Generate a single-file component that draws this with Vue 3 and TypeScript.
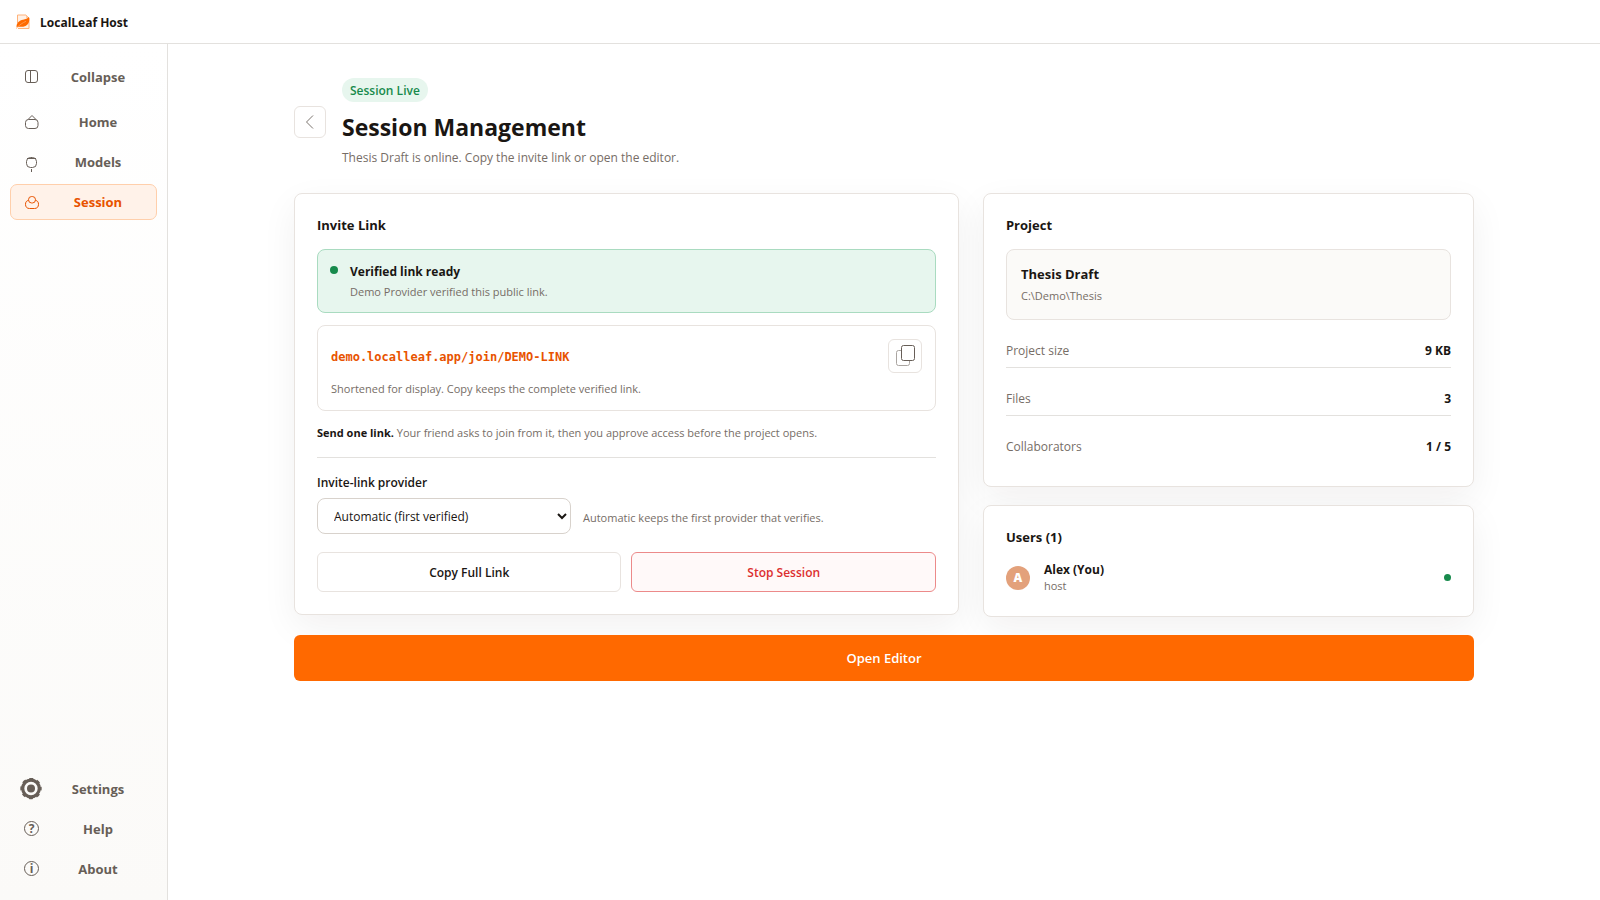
<script setup lang="ts">
import { ref } from 'vue'

interface NavItem {
  id: string
  label: string
}

const primaryNav: NavItem[] = [
  { id: 'home', label: 'Home' },
  { id: 'models', label: 'Models' },
  { id: 'session', label: 'Session' },
]

const secondaryNav: NavItem[] = [
  { id: 'settings', label: 'Settings' },
  { id: 'help', label: 'Help' },
  { id: 'about', label: 'About' },
]

const active = ref('session')
const provider = ref('auto')

const stats = [
  { label: 'Project size', value: '9 KB' },
  { label: 'Files', value: '3' },
  { label: 'Collaborators', value: '1 / 5' },
]
</script>

<template>
  <div class="app">
    <header class="topbar">
      <svg class="logo" viewBox="0 0 16 16" aria-hidden="true">
        <path d="M2.500 9V1H11L14 4V14.500H3" fill="#fff1e6" stroke="#ffb27a" stroke-width="1" />
        <path d="M11 1V4H14Z" fill="#ffc79e" />
        <path d="M1.500 13C1.500 8.500 4.500 6.500 8 5.800C10.500 5.300 12.500 4.500 14 3C14.800 7 13.800 10.500 10.500 12C7.500 13.300 4.500 12.500 1.500 13Z" fill="#ff6a00" />
        <path d="M1 14.500C4.500 11 7.500 8.800 11 7.300" fill="none" stroke="#ffa05c" stroke-width="0.800" />
      </svg>
      <span class="brand">LocalLeaf Host</span>
    </header>

    <div class="body">
      <aside class="sidebar">
        <button type="button" class="nav-item collapse">
          <svg class="icon" viewBox="0 0 22 22" aria-hidden="true">
            <rect x="5.500" y="4.500" width="12" height="12" rx="2.500" />
            <path d="M10.500 4.500V16.500" />
          </svg>
          <span>Collapse</span>
        </button>

        <nav class="nav" aria-label="Main">
          <button
            v-for="item in primaryNav"
            :key="item.id"
            type="button"
            class="nav-item"
            :class="{ active: active === item.id }"
            @click="active = item.id"
          >
            <svg v-if="item.id === 'home'" class="icon" viewBox="0 0 22 22" aria-hidden="true">
              <rect x="5.500" y="8.500" width="12.500" height="9" rx="3" />
              <path d="M8 8.500L12 4.500L16 8.500" />
            </svg>
            <svg v-else-if="item.id === 'models'" class="icon" viewBox="0 0 22 22" aria-hidden="true">
              <rect x="6.500" y="6.500" width="10" height="10" rx="4" />
              <path d="M7 7.500H16M11.500 18V21" />
            </svg>
            <svg v-else class="icon" viewBox="0 0 22 22" aria-hidden="true">
              <rect x="8.500" y="5.500" width="7" height="6.500" rx="3.200" />
              <path d="M8.500 9.300C6.500 9.800 5.500 11 5.500 13.300C5.500 16 7 17.500 9.500 17.500H14.500C17 17.500 18.500 16 18.500 13.300C18.500 11 17.500 9.800 15.500 9.300" />
            </svg>
            <span>{{ item.label }}</span>
          </button>
        </nav>

        <nav class="nav bottom" aria-label="Support">
          <button
            v-for="item in secondaryNav"
            :key="item.id"
            type="button"
            class="nav-item"
            :class="{ active: active === item.id }"
            @click="active = item.id"
          >
            <svg v-if="item.id === 'settings'" class="icon" viewBox="0 0 22 22" aria-hidden="true">
              <circle cx="11" cy="10.500" r="8.300" stroke-width="3.200" />
              <circle cx="11" cy="10.500" r="9.900" stroke-width="1.600" stroke-dasharray="4 3.775" stroke-dashoffset="2" />
              <circle cx="11" cy="10.500" r="4" class="solid" />
            </svg>
            <svg v-else class="icon" viewBox="0 0 22 22" aria-hidden="true">
              <circle cx="11.500" cy="10.500" r="7" />
              <text x="11.500" y="15" text-anchor="middle">{{ item.id === 'help' ? '?' : 'i' }}</text>
            </svg>
            <span>{{ item.label }}</span>
          </button>
        </nav>
      </aside>

      <main class="main">
        <div class="content">
          <div class="page-head">
            <button type="button" class="back" aria-label="Back">
              <svg viewBox="0 0 16 16" aria-hidden="true"><path d="M11 1.500L4.500 8L11 14.500" /></svg>
            </button>
            <div class="page-title">
              <span class="pill">Session Live</span>
              <h1>Session Management</h1>
              <p>Thesis Draft is online. Copy the invite link or open the editor.</p>
            </div>
          </div>

          <div class="grid">
            <section class="card invite">
              <h2>Invite Link</h2>

              <div class="verified" role="status">
                <span class="dot large"></span>
                <div>
                  <strong>Verified link ready</strong>
                  <p>Demo Provider verified this public link.</p>
                </div>
              </div>

              <div class="link-box">
                <div class="link-row">
                  <code>demo.localleaf.app/join/DEMO-LINK</code>
                  <button type="button" class="copy" aria-label="Copy link">
                    <svg viewBox="0 0 22 22" aria-hidden="true">
                      <rect class="sheet-back" x="2.500" y="5.500" width="13" height="15" rx="2" />
                      <rect class="sheet-front" x="7.500" y="0.500" width="13" height="15" rx="2" />
                    </svg>
                  </button>
                </div>
                <p>Shortened for display. Copy keeps the complete verified link.</p>
              </div>

              <p class="hint"><strong>Send one link.</strong> Your friend asks to join from it, then you approve access before the project opens.</p>

              <div class="provider">
                <label for="provider">Invite-link provider</label>
                <div class="provider-row">
                  <select id="provider" v-model="provider">
                    <option value="auto">Automatic (first verified)</option>
                  </select>
                  <span>Automatic keeps the first provider that verifies.</span>
                </div>
              </div>

              <div class="actions">
                <button type="button" class="btn">Copy Full Link</button>
                <button type="button" class="btn danger">Stop Session</button>
              </div>
            </section>

            <div class="side">
              <section class="card">
                <h2>Project</h2>
                <div class="project">
                  <strong>Thesis Draft</strong>
                  <span>C:\Demo\Thesis</span>
                </div>
                <dl class="stats">
                  <div v-for="stat in stats" :key="stat.label">
                    <dt>{{ stat.label }}</dt>
                    <dd>{{ stat.value }}</dd>
                  </div>
                </dl>
              </section>

              <section class="card">
                <h2>Users (1)</h2>
                <div class="user">
                  <span class="avatar">A</span>
                  <div class="user-text">
                    <strong>Alex (You)</strong>
                    <span>host</span>
                  </div>
                  <span class="dot"></span>
                </div>
              </section>
            </div>
          </div>

          <button type="button" class="open-editor">Open Editor</button>
        </div>
      </main>
    </div>
  </div>
</template>

<style>
body {
  margin: 0;
  background: #fff;
}
</style>

<style scoped>
.app {
  min-height: 100vh;
  display: flex;
  flex-direction: column;
  color: #1a1613;
  font-family: "Open Sans", "Noto Sans", sans-serif;
  font-size: 12px;
}

.app * {
  box-sizing: border-box;
}

button,
select {
  font-family: inherit;
  color: inherit;
  cursor: pointer;
}

h1,
h2,
p,
dl,
dd {
  margin: 0;
}

.topbar {
  height: 44px;
  display: flex;
  align-items: center;
  gap: 9px;
  padding: 1px 15px 0;
  border-bottom: 1px solid #e3e1de;
}

.logo {
  width: 16px;
  height: 16px;
}

.brand {
  font-size: 12px;
  font-weight: 700;
}

.body {
  flex: 1;
  display: flex;
}

.sidebar {
  width: 168px;
  flex: none;
  display: flex;
  flex-direction: column;
  padding: 15px 10px 13px;
  border-right: 1px solid #e3e1de;
  background: linear-gradient(#fff, #fbfaf8);
}

.nav {
  display: flex;
  flex-direction: column;
  gap: 4px;
}

.nav.bottom {
  margin-top: auto;
}

.nav-item {
  height: 36px;
  display: grid;
  grid-template-columns: 22px 1fr;
  align-items: center;
  gap: 8px;
  padding: 0 10px 0 9px;
  border: 1px solid transparent;
  border-radius: 7px;
  background: none;
  color: #675e57;
  font-size: 13px;
  font-weight: 700;
  text-align: center;
}

.nav-item.collapse {
  margin-bottom: 9px;
}

.nav-item.active {
  border-color: #ffcfab;
  background: #fff2e9;
  color: #e85300;
}

.icon {
  width: 22px;
  height: 22px;
  fill: none;
  stroke: currentColor;
  stroke-width: 1;
}

.icon .solid {
  fill: currentColor;
  stroke: none;
}

.icon text {
  fill: currentColor;
  stroke: none;
  font-size: 12px;
  font-weight: 700;
}

.main {
  flex: 1;
  min-width: 0;
  padding: 34px 40px;
}

.content {
  max-width: 1180px;
  margin: 0 auto;
}

.page-head {
  display: flex;
  align-items: center;
  gap: 16px;
  margin-bottom: 27px;
}

.back {
  width: 32px;
  height: 32px;
  display: grid;
  place-items: center;
  padding: 0;
  border: 1px solid #e8e3df;
  border-radius: 6px;
  background: #fff;
}

.back svg {
  width: 16px;
  height: 16px;
  fill: none;
  stroke: #7b746e;
  stroke-width: 1;
}

.page-title {
  display: flex;
  flex-direction: column;
  align-items: flex-start;
}

.pill {
  padding: 2px 8px 0;
  border-radius: 12px;
  background: #e7f6ee;
  color: #178a4c;
  font-size: 12px;
  font-weight: 600;
  line-height: 22px;
}

h1 {
  margin-top: 9px;
  font-size: 23px;
  font-weight: 700;
  line-height: 32px;
}

.page-title p {
  margin-top: 7px;
  color: #766d66;
  font-size: 12px;
  line-height: 16px;
}

.grid {
  display: grid;
  grid-template-columns: 65fr 48fr;
  align-items: start;
  gap: 24px;
}

.side {
  display: grid;
  gap: 18px;
}

.card {
  padding: 22px;
  border: 1px solid #e8e3df;
  border-radius: 8px;
  background: #fff;
  box-shadow: 0 12px 36px rgba(28, 25, 23, 0.06);
}

h2 {
  margin-bottom: 14px;
  font-size: 13px;
  font-weight: 700;
  line-height: 19px;
}

.verified {
  display: flex;
  gap: 12px;
  padding: 12px 12px 10px;
  border: 1px solid #a9dbc0;
  border-radius: 8px;
  background: #e7f6ee;
}

.verified strong {
  display: block;
  font-size: 12px;
  line-height: 20px;
}

.verified p {
  color: #766d66;
  font-size: 11px;
  line-height: 20px;
}

.dot {
  width: 7px;
  height: 7px;
  flex: none;
  border-radius: 50%;
  background: #178a4c;
}

.dot.large {
  width: 8px;
  height: 8px;
  margin-top: 4px;
}

.link-box {
  margin-top: 12px;
  padding: 13px;
  border: 1px solid #e8e3df;
  border-radius: 8px;
}

.link-row {
  display: flex;
  align-items: center;
  justify-content: space-between;
}

code {
  padding-top: 2px;
  color: #e85300;
  font-family: "DejaVu Sans Mono", "Liberation Mono", monospace;
  font-size: 12px;
  font-weight: 700;
}

.copy {
  width: 34px;
  height: 34px;
  display: grid;
  place-items: center;
  padding: 0;
  border: 1px solid #e8e3df;
  border-radius: 6px;
  background: #fff;
}

.copy svg {
  width: 22px;
  height: 22px;
  stroke-width: 1;
}

.sheet-back {
  fill: none;
  stroke: #aaa5a1;
}

.sheet-front {
  fill: #fff;
  stroke: #675e57;
}

.link-box p {
  margin-top: 8px;
  color: #766d66;
  font-size: 11px;
  line-height: 16px;
}

.hint {
  padding: 12px 0 14px;
  border-bottom: 1px solid #e3e1de;
  color: #766d66;
  font-size: 11px;
  line-height: 20px;
}

.hint strong {
  color: #1a1613;
}

.provider label {
  display: block;
  padding: 15px 0 5px;
  font-size: 12px;
  font-weight: 600;
  line-height: 20px;
}

.provider-row {
  display: flex;
  align-items: center;
  gap: 12px;
  color: #766d66;
  font-size: 11px;
}

.provider-row span {
  padding-top: 2px;
}

select {
  width: 254px;
  height: 36px;
  padding: 0 12px;
  border: 1px solid #d8d2cc;
  border-radius: 8px;
  background: #fff;
  color: #1a1613;
  font-size: 12px;
}

.actions {
  display: grid;
  grid-template-columns: 1fr 1fr;
  gap: 10px;
  margin-top: 18px;
}

.btn {
  height: 40px;
  border: 1px solid #e8e3df;
  border-radius: 6px;
  background: #fff;
  font-size: 12px;
  font-weight: 600;
}

.btn.danger {
  border-color: #ec8a8a;
  background: #fff9f9;
  color: #dc2f2f;
}

.project {
  display: grid;
  padding: 13px 14px;
  border: 1px solid #e8e3df;
  border-radius: 8px;
  background: #fbfaf8;
}

.project strong {
  font-size: 13px;
  line-height: 22px;
}

.project span {
  color: #766d66;
  font-size: 11px;
  line-height: 21px;
}

.stats div {
  height: 48px;
  display: flex;
  align-items: center;
  justify-content: space-between;
  padding-top: 14px;
  border-bottom: 1px solid #e3e1de;
}

.stats div:last-child {
  border-bottom-color: transparent;
}

.stats dt {
  color: #766d66;
}

.stats dd {
  font-weight: 700;
}

.user {
  display: flex;
  align-items: center;
}

.user-text {
  flex: 1;
  display: grid;
  margin-left: 14px;
}

.user-text strong {
  font-size: 12px;
  line-height: 17px;
}

.user-text span {
  color: #766d66;
  font-size: 11px;
  line-height: 16px;
}

.avatar {
  width: 24px;
  height: 24px;
  display: grid;
  place-items: center;
  border-radius: 50%;
  background: #e3a17b;
  color: #fff;
  font-size: 12px;
  font-weight: 800;
}

.open-editor {
  width: 100%;
  height: 46px;
  display: block;
  position: relative;
  margin-top: 18px;
  border: 0;
  border-radius: 6px;
  background: #ff6900;
  color: #fff;
  font-size: 13px;
  font-weight: 600;
}
</style>
